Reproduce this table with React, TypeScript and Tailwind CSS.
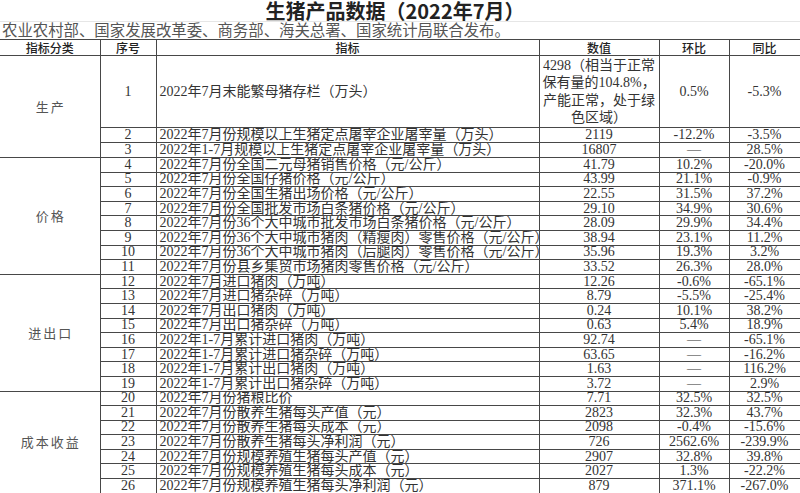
import React from 'react';

type Row = [string, string | string[], string, string];

const ROWS: Row[] = [
  ['2022年7月末能繁母猪存栏（万头）', ['4298（相当于正常', '保有量的104.8%，', '产能正常，处于绿', '色区域）'], '0.5%', '-5.3%'],
  ['2022年7月份规模以上生猪定点屠宰企业屠宰量（万头）', '2119', '-12.2%', '-3.5%'],
  ['2022年1-7月规模以上生猪定点屠宰企业屠宰量（万头）', '16807', '—', '28.5%'],
  ['2022年7月份全国二元母猪销售价格（元/公斤）', '41.79', '10.2%', '-20.0%'],
  ['2022年7月份全国仔猪价格（元/公斤）', '43.99', '21.1%', '-0.9%'],
  ['2022年7月份全国生猪出场价格（元/公斤）', '22.55', '31.5%', '37.2%'],
  ['2022年7月份全国批发市场白条猪价格（元/公斤）', '29.10', '34.9%', '30.6%'],
  ['2022年7月份36个大中城市批发市场白条猪价格（元/公斤）', '28.09', '29.9%', '34.4%'],
  ['2022年7月份36个大中城市猪肉（精瘦肉）零售价格（元/公斤）', '38.94', '23.1%', '11.2%'],
  ['2022年7月份36个大中城市猪肉（后腿肉）零售价格（元/公斤）', '35.96', '19.3%', '3.2%'],
  ['2022年7月份县乡集贸市场猪肉零售价格（元/公斤）', '33.52', '26.3%', '28.0%'],
  ['2022年7月进口猪肉（万吨）', '12.26', '-0.6%', '-65.1%'],
  ['2022年7月进口猪杂碎（万吨）', '8.79', '-5.5%', '-25.4%'],
  ['2022年7月出口猪肉（万吨）', '0.24', '10.1%', '38.2%'],
  ['2022年7月出口猪杂碎（万吨）', '0.63', '5.4%', '18.9%'],
  ['2022年1-7月累计进口猪肉（万吨）', '92.74', '—', '-65.1%'],
  ['2022年1-7月累计进口猪杂碎（万吨）', '63.65', '—', '-16.2%'],
  ['2022年1-7月累计出口猪肉（万吨）', '1.63', '—', '116.2%'],
  ['2022年1-7月累计出口猪杂碎（万吨）', '3.72', '—', '2.9%'],
  ['2022年7月份猪粮比价', '7.71', '32.5%', '32.5%'],
  ['2022年7月份散养生猪每头产值（元）', '2823', '32.3%', '43.7%'],
  ['2022年7月份散养生猪每头成本（元）', '2098', '-0.4%', '-15.6%'],
  ['2022年7月份散养生猪每头净利润（元）', '726', '2562.6%', '-239.9%'],
  ['2022年7月份规模养殖生猪每头产值（元）', '2907', '32.8%', '39.8%'],
  ['2022年7月份规模养殖生猪每头成本（元）', '2027', '1.3%', '-22.2%'],
  ['2022年7月份规模养殖生猪每头净利润（元）', '879', '371.1%', '-267.0%'],
];

// category label -> [label, row count], keyed by first row index
const GROUPS: Record<number, [string, number]> = {
  0: ['生产', 3],
  3: ['价格', 8],
  11: ['进出口', 8],
  19: ['成本收益', 7],
};

const cell = 'border border-[#474747] px-[3px] py-0 leading-[12px] align-middle';

const App: React.FC = () => {
  return (
    <div className="w-[800px] h-[493px] overflow-hidden bg-white text-[#333] font-['Liberation_Serif','Noto_Sans_CJK_SC',serif]">
      <div className="h-[22px] border-b border-[#e6e6e6] flex justify-center">
        <h1 className="text-[20px] leading-[22px] font-bold text-[#222] font-['Noto_Sans_CJK_SC',sans-serif] pr-[10px]">
          生猪产品数据（2022年7月）
        </h1>
      </div>
      <p className="h-[17px] pl-[2px] text-[15.4px] leading-[17px] text-[#555] whitespace-nowrap">
        农业农村部、国家发展改革委、商务部、海关总署、国家统计局联合发布。
      </p>

      <table className="table-fixed border-collapse w-[800px] text-[14px]">
        <colgroup>
          <col className="w-[100px]" />
          <col className="w-[56px]" />
          <col className="w-[383px]" />
          <col className="w-[120px]" />
          <col className="w-[70px]" />
          <col className="w-[71px]" />
        </colgroup>
        <thead>
          <tr className="h-[16px] text-[12px] text-[#222] font-['Noto_Sans_CJK_SC',sans-serif]">
            <th className={`${cell} border-l-0 font-medium`}>指标分类</th>
            <th className={`${cell} font-medium`}>序号</th>
            <th className={`${cell} font-medium`}>指标</th>
            <th className={`${cell} font-medium`}>数值</th>
            <th className={`${cell} font-medium`}>环比</th>
            <th className={`${cell} font-medium`}>同比</th>
          </tr>
        </thead>
        <tbody>
          {ROWS.map(([name, value, mom, yoy], i) => {
            const group = GROUPS[i];
            const height = i === 0 ? 'h-[72px]' : i < 3 ? 'h-[15px]' : 'h-[14.6px]';
            return (
              <tr key={i} className={height}>
                {group && (
                  <td
                    rowSpan={group[1]}
                    className={`${cell} border-l-0 text-center text-[13px] tracking-[2px] pl-[5px] text-[#555] font-['Noto_Sans_CJK_SC',sans-serif]`}
                  >
                    {group[0]}
                  </td>
                )}
                <td className={`${cell} text-center`}>{i + 1}</td>
                <td className={`${cell} whitespace-nowrap overflow-hidden`}>{name}</td>
                <td className={`${cell} text-center whitespace-nowrap overflow-hidden`}>
                  {Array.isArray(value)
                    ? value.map((line) => (
                        <span key={line} className="block leading-[17.5px]">
                          {line}
                        </span>
                      ))
                    : value}
                </td>
                <td className={`${cell} text-center`}>{mom}</td>
                <td className={`${cell} text-center`}>{yoy}</td>
              </tr>
            );
          })}
        </tbody>
      </table>
    </div>
  );
};

export default App;
